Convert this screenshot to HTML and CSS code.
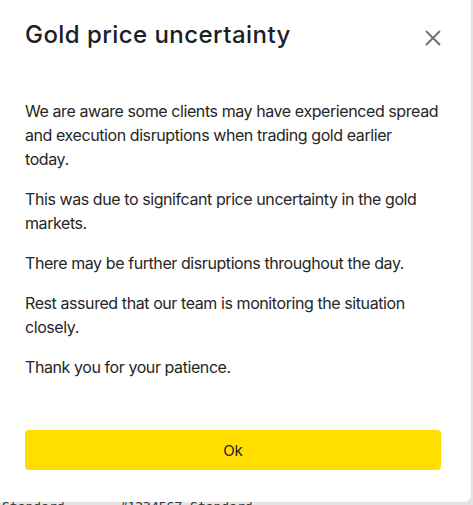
FILE: index.html
```html
<!DOCTYPE html>
<html>
<head>
<meta charset="utf-8">
<link rel="stylesheet" href="styles.css">
</head>
<body>
<div class="page">
  <div class="backdrop-text"><span>Standard</span><span>#1234567 Standard</span></div>
</div>
<div class="modal">
  <div class="modal-header">
    <h1 class="title">Gold price uncertainty</h1>
    <button class="close" aria-label="Close">
      <svg width="16" height="16" viewBox="0 0 16 16"><path d="M1.5 1.5 L14.5 14.5 M14.5 1.5 L1.5 14.5" stroke="#6b6f73" stroke-width="1.8" stroke-linecap="round"/></svg>
    </button>
  </div>
  <div class="modal-body">
    <p>We are aware some clients may have experienced spread and execution disruptions when trading gold earlier<br>today.</p>
    <p>This was due to signifcant price uncertainty in the gold markets.</p>
    <p>There may be further disruptions throughout the day.</p>
    <p>Rest assured that our team is monitoring the situation closely.</p>
    <p>Thank you for your patience.</p>
  </div>
  <div class="modal-footer">
    <button class="ok">Ok</button>
  </div>
</div>
</body>
</html>
```
FILE: styles.css
```css
html, body {
  margin: 0;
  padding: 0;
  width: 473px;
  height: 505px;
  overflow: hidden;
  background: #e4e4e4;
  font-family: Inter, "Liberation Sans", sans-serif;
}
.page {
  height: 505px;
  display: flex;
  flex-direction: column;
  justify-content: flex-end;
}
.backdrop-text {
  display: flex;
  gap: 55px;
  padding: 0 0 0 2px;
  font-family: "DejaVu Sans Mono", monospace;
  font-size: 13px;
  color: #333;
  height: 6px;
  line-height: 16px;
}
.modal {
  position: absolute;
  top: 0;
  left: 0;
  width: 471px;
  height: 502px;
  background: #fff;
  border-radius: 0 0 7px 0;
  box-sizing: border-box;
  padding: 0 22px 0 25px;
  display: flex;
  flex-direction: column;
}
.modal-header {
  display: flex;
  justify-content: space-between;
  align-items: center;
  padding-top: 19px;
  padding-right: 9px;
}
.title {
  margin: 0;
  font-size: 24px;
  font-weight: 500;
  color: #1b2026;
  line-height: 32px;
  letter-spacing: 0.45px;
}
.close {
  border: 0;
  background: none;
  padding: 0;
  width: 16px;
  height: 16px;
  margin-right: -1px;
  margin-top: 6px;
  display: flex;
}
.modal-body {
  padding-top: 48px;
  color: #262626;
  font-size: 16px;
  line-height: 24px;
  letter-spacing: -0.42px;
  padding-right: 9.5px;
}
.modal-body p {
  margin: 0 0 16px;
}
.modal-footer {
  margin-top: auto;
  padding-bottom: 32px;
}
.ok {
  width: 416px;
  height: 40px;
  border: 0;
  border-radius: 4px;
  background: #ffde00;
  font-family: Inter, "Liberation Sans", sans-serif;
  font-size: 15px;
  color: #222;
}
```
